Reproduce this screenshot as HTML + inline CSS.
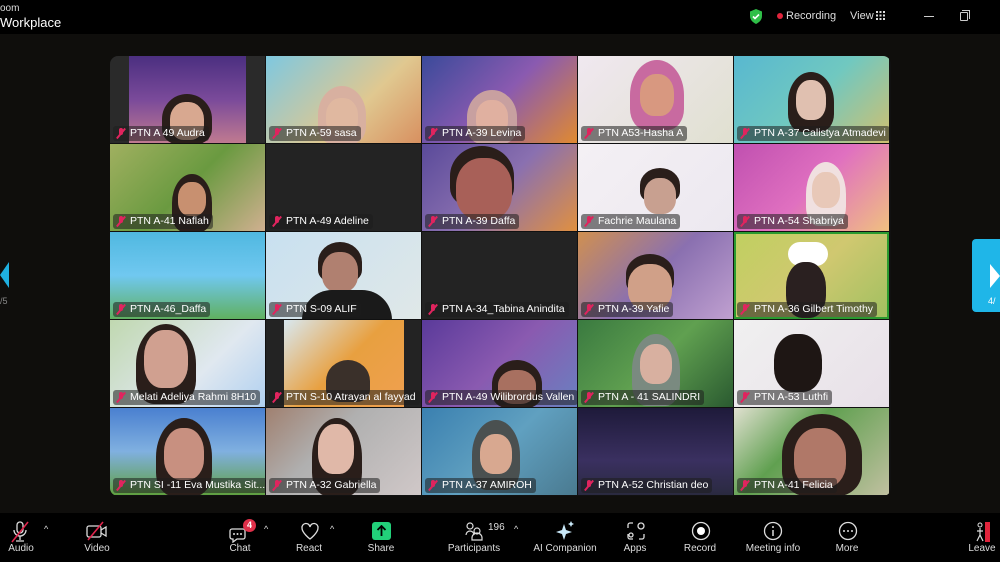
<!DOCTYPE html>
<html><head><meta charset="utf-8"><style>
*{margin:0;padding:0;box-sizing:border-box}
body{width:1000px;height:562px;background:#0f0e0c;font-family:"Liberation Sans",sans-serif;color:#fff;position:relative;overflow:hidden}
#top{position:absolute;left:0;top:0;width:1000px;height:34px;background:#000}
.grid{position:absolute;left:110px;top:56px;width:781px;height:440px;border-radius:8px;overflow:hidden;background:#111}
.t{position:absolute;width:155px;height:87px;overflow:hidden}
.lbl{position:absolute;left:3px;bottom:2px;height:15px;padding:0 4px 0 3px;background:rgba(30,30,30,.55);border-radius:3px;font-size:10.5px;line-height:15px;white-space:nowrap;display:flex;align-items:center;gap:4px}
.mic{width:10px;height:11px;position:relative}
.mic:before{content:"";position:absolute;left:3px;top:0;width:4px;height:7px;border-radius:2px;background:#e0245e}
.mic:after{content:"";position:absolute;left:4px;top:-1px;width:2px;height:13px;background:#e0245e;transform:rotate(40deg)}
.face{position:absolute;border-radius:45% 45% 40% 40%}
.hair{position:absolute;border-radius:50% 50% 30% 30%;background:#2a1e1a}
.tb{position:absolute;top:513px;left:0;width:1000px;height:49px;background:#000}
.it{position:absolute;top:543px;font-size:10px;color:#ddd;transform:translateX(-50%);white-space:nowrap}
.ic{position:absolute;top:521px;transform:translateX(-50%)}
.car{position:absolute;top:524px;font-size:9px;color:#ddd}
</style></head><body>
<div id="top">
<div style="position:absolute;left:0;top:3px;font-size:10px;color:#ddd">oom</div>
<div style="position:absolute;left:0;top:15px;font-size:13px;color:#fff">Workplace</div>
<svg style="position:absolute;left:749px;top:9px" width="14" height="15" viewBox="0 0 14 15"><path d="M7 0L13 2.5V7C13 11 10 13.5 7 15 4 13.5 1 11 1 7V2.5Z" fill="#2fbf48"/><path d="M4 7.5l2 2 4-4" stroke="#fff" stroke-width="1.6" fill="none"/></svg>
<div style="position:absolute;left:777px;top:13px;width:6px;height:6px;border-radius:3px;background:#e0243c"></div>
<div style="position:absolute;left:786px;top:10px;font-size:11px;color:#ddd">Recording</div>
<div style="position:absolute;left:850px;top:10px;font-size:11px;color:#ddd">View</div>
<svg style="position:absolute;left:876px;top:11px" width="9" height="9"><g fill="#ddd"><rect x="0" y="0" width="2" height="2"/><rect x="3.5" y="0" width="2" height="2"/><rect x="7" y="0" width="2" height="2"/><rect x="0" y="3.5" width="2" height="2"/><rect x="3.5" y="3.5" width="2" height="2"/><rect x="7" y="3.5" width="2" height="2"/><rect x="0" y="7" width="2" height="2"/><rect x="3.5" y="7" width="2" height="2"/><rect x="7" y="7" width="2" height="2"/></g></svg>
<div style="position:absolute;left:924px;top:16px;width:10px;height:1px;background:#ccc"></div>
<div style="position:absolute;left:960px;top:12px;width:8px;height:9px;border:1px solid #ccc;border-radius:1px"></div>
<div style="position:absolute;left:962px;top:10px;width:8px;height:9px;border-top:1px solid #ccc;border-right:1px solid #ccc"></div>
</div>

<div class="grid">
<!-- row1 -->
<div class="t" style="left:0;top:0;background:#2a2a2a"><div style="position:absolute;left:19px;top:0;width:117px;height:87px;background:linear-gradient(180deg,#4b2f80,#7a4a9a 50%,#c07a90)"></div><div class="hair" style="left:52px;top:38px;width:50px;height:50px"></div><div class="face" style="left:60px;top:46px;width:34px;height:38px;background:#d8a890"></div><div class="lbl"><span class="mic"></span>PTN A 49 Audra</div></div>
<div class="t" style="left:156px;top:0;background:linear-gradient(135deg,#7ec8e0,#e0c890 60%,#d89060)"><div class="hair" style="left:52px;top:30px;width:48px;height:58px;background:#d8b0a0"></div><div class="face" style="left:60px;top:42px;width:32px;height:38px;background:#e0b8a0"></div><div class="lbl"><span class="mic"></span>PTN A-59 sasa</div></div>
<div class="t" style="left:312px;top:0;background:linear-gradient(135deg,#3a4a9a,#8a5ab0 50%,#e08a30)"><div class="hair" style="left:45px;top:34px;width:50px;height:54px;background:#c8a0a0"></div><div class="face" style="left:54px;top:44px;width:32px;height:36px;background:#e0b0a0"></div><div class="lbl"><span class="mic"></span>PTN A-39 Levina</div></div>
<div class="t" style="left:468px;top:0;background:linear-gradient(135deg,#f0e8f0,#e0e0d0)"><div class="hair" style="left:52px;top:4px;width:54px;height:70px;background:#c86aa0"></div><div class="face" style="left:62px;top:18px;width:34px;height:42px;background:#d89880"></div><div class="lbl"><span class="mic"></span>PTN A53-Hasha A</div></div>
<div class="t" style="left:624px;top:0;background:linear-gradient(135deg,#58b8d0,#70c8c0 50%,#d0c070)"><div class="hair" style="left:54px;top:16px;width:46px;height:60px"></div><div class="face" style="left:62px;top:24px;width:30px;height:40px;background:#e0c0b0"></div><div class="lbl"><span class="mic"></span>PTN A-37 Calistya Atmadevi</div></div>
<!-- row2 -->
<div class="t" style="left:0;top:88px;background:linear-gradient(135deg,#a0b060,#6a9a40 50%,#d0b090)"><div class="hair" style="left:62px;top:30px;width:40px;height:58px"></div><div class="face" style="left:68px;top:38px;width:28px;height:34px;background:#c89070"></div><div class="lbl"><span class="mic"></span>PTN A-41 Naflah</div></div>
<div class="t" style="left:156px;top:88px;background:#232323"><div class="lbl"><span class="mic"></span>PTN A-49 Adeline</div></div>
<div class="t" style="left:312px;top:88px;background:linear-gradient(135deg,#5a4a9a,#8a70b0 50%,#e09040)"><div class="hair" style="left:28px;top:2px;width:64px;height:60px"></div><div class="face" style="left:34px;top:14px;width:56px;height:62px;background:#a86058"></div><div class="lbl"><span class="mic"></span>PTN A-39 Daffa</div></div>
<div class="t" style="left:468px;top:88px;background:linear-gradient(135deg,#f4f0f4,#ece8f0)"><div class="hair" style="left:62px;top:24px;width:40px;height:34px"></div><div class="face" style="left:66px;top:34px;width:32px;height:36px;background:#c8a090"></div><div class="lbl"><span class="mic"></span>Fachrie Maulana</div></div>
<div class="t" style="left:624px;top:88px;background:linear-gradient(135deg,#c050b0,#e070c0 50%,#f0c080)"><div class="hair" style="left:72px;top:18px;width:40px;height:64px;background:#f0e0e0"></div><div class="face" style="left:78px;top:28px;width:28px;height:36px;background:#e8c8b8"></div><div class="lbl"><span class="mic"></span>PTN A-54 Shabriya</div></div>
<!-- row3 -->
<div class="t" style="left:0;top:176px;background:linear-gradient(180deg,#50b8e0,#70c8f0 50%,#60b060)"><div class="lbl"><span class="mic"></span>PTN A-46_Daffa</div></div>
<div class="t" style="left:156px;top:176px;background:linear-gradient(135deg,#c8e0f0,#e0e8e8)"><div class="hair" style="left:52px;top:10px;width:44px;height:40px"></div><div class="face" style="left:56px;top:20px;width:36px;height:40px;background:#b08070"></div><div style="position:absolute;left:36px;top:58px;width:90px;height:30px;background:#1a1a1a;border-radius:30px 30px 0 0"></div><div class="lbl"><span class="mic"></span>PTN S-09 ALIF</div></div>
<div class="t" style="left:312px;top:176px;background:#232323"><div class="lbl"><span class="mic"></span>PTN A-34_Tabina Anindita</div></div>
<div class="t" style="left:468px;top:176px;background:linear-gradient(135deg,#d09050,#8a70b0 50%,#c0a0d0)"><div class="hair" style="left:48px;top:22px;width:48px;height:40px"></div><div class="face" style="left:50px;top:32px;width:44px;height:46px;background:#d0a088"></div><div class="lbl"><span class="mic"></span>PTN A-39 Yafie</div></div>
<div class="t" style="left:624px;top:176px;background:linear-gradient(135deg,#c0d060,#d0c870 50%,#a0c060);outline:2px solid #2a9a30;outline-offset:-2px"><div style="position:absolute;left:54px;top:10px;width:40px;height:24px;background:#fff;border-radius:12px"></div><div class="face" style="left:52px;top:30px;width:40px;height:56px;background:#2a2020"></div><div class="lbl"><span class="mic"></span>PTN A-36 Gilbert Timothy</div></div>
<!-- row4 -->
<div class="t" style="left:0;top:264px;background:linear-gradient(135deg,#c0d8b0,#e0e8f0 60%,#b0d0f0)"><div class="hair" style="left:26px;top:4px;width:60px;height:80px"></div><div class="face" style="left:34px;top:10px;width:44px;height:58px;background:#d0a090"></div><div class="lbl"><span class="mic"></span>Melati Adeliya Rahmi 8H10</div></div>
<div class="t" style="left:156px;top:264px;background:#232323"><div style="position:absolute;left:18px;top:0;width:120px;height:87px;background:linear-gradient(135deg,#d8e8f0,#e8a040 50%,#f0a050)"></div><div class="hair" style="left:60px;top:40px;width:44px;height:42px;background:#3a302a"></div><div class="lbl"><span class="mic"></span>PTN S-10 Atrayan al fayyad</div></div>
<div class="t" style="left:312px;top:264px;background:linear-gradient(135deg,#5a3a9a,#8a5ab0 50%,#6a80c0)"><div class="hair" style="left:70px;top:40px;width:50px;height:48px"></div><div class="face" style="left:76px;top:50px;width:38px;height:34px;background:#a87060"></div><div class="lbl"><span class="mic"></span>PTN A-49 Wilibrordus Vallen</div></div>
<div class="t" style="left:468px;top:264px;background:linear-gradient(135deg,#3a7a40,#60a050 50%,#2a5a30)"><div class="hair" style="left:54px;top:14px;width:48px;height:72px;background:#7a8a80"></div><div class="face" style="left:62px;top:24px;width:32px;height:40px;background:#d8b0a0"></div><div class="lbl"><span class="mic"></span>PTN A - 41 SALINDRI</div></div>
<div class="t" style="left:624px;top:264px;background:linear-gradient(135deg,#f0f0f0,#e8e0e8)"><div class="face" style="left:40px;top:14px;width:48px;height:58px;background:#1e1614"></div><div class="lbl"><span class="mic"></span>PTN A-53 Luthfi</div></div>
<!-- row5 -->
<div class="t" style="left:0;top:352px;background:linear-gradient(180deg,#4a80d0,#80b0e0 50%,#60a040)"><div class="hair" style="left:46px;top:10px;width:56px;height:78px"></div><div class="face" style="left:54px;top:20px;width:40px;height:52px;background:#c89080"></div><div class="lbl"><span class="mic"></span>PTN SI -11 Eva Mustika Sit...</div></div>
<div class="t" style="left:156px;top:352px;background:linear-gradient(135deg,#a08070,#b0b0b0 40%,#d0c8c8)"><div class="hair" style="left:46px;top:10px;width:50px;height:78px"></div><div class="face" style="left:52px;top:16px;width:36px;height:50px;background:#e0b8a8"></div><div class="lbl"><span class="mic"></span>PTN A-32 Gabriella</div></div>
<div class="t" style="left:312px;top:352px;background:linear-gradient(135deg,#3a80b0,#60a0c0 50%,#4a7a90)"><div class="hair" style="left:50px;top:12px;width:48px;height:70px;background:#4a5050"></div><div class="face" style="left:58px;top:26px;width:32px;height:40px;background:#d8a890"></div><div class="lbl"><span class="mic"></span>PTN A-37 AMIROH</div></div>
<div class="t" style="left:468px;top:352px;background:linear-gradient(180deg,#1e1a3a,#3a3060 60%,#2a2a40)"><div class="lbl"><span class="mic"></span>PTN A-52 Christian deo</div></div>
<div class="t" style="left:624px;top:352px;background:linear-gradient(135deg,#e0e0d0,#60a050 40%,#c0c0a0)"><div class="hair" style="left:48px;top:6px;width:80px;height:82px"></div><div class="face" style="left:60px;top:20px;width:52px;height:60px;background:#b07868"></div><div class="lbl"><span class="mic"></span>PTN A-41 Felicia</div></div>
</div>

<div style="position:absolute;left:0;top:262px;width:0;height:0;border-top:13px solid transparent;border-bottom:13px solid transparent;border-right:9px solid #1fb0e0"></div>
<div style="position:absolute;left:0;top:296px;font-size:9px;color:#888">/5</div>
<div style="position:absolute;left:972px;top:239px;width:28px;height:73px;background:#1fb6e8;border-radius:4px 0 0 4px"></div>
<div style="position:absolute;left:990px;top:264px;width:0;height:0;border-top:12px solid transparent;border-bottom:12px solid transparent;border-left:10px solid #fff"></div>
<div style="position:absolute;left:988px;top:296px;font-size:9px;color:#fff">4/</div>

<div class="tb"></div>
<svg class="ic" style="left:20px" width="20" height="22" viewBox="0 0 20 22"><rect x="7" y="1" width="6" height="11" rx="3" stroke="#ddd" fill="none" stroke-width="1.3"/><path d="M4 9a6 6 0 0012 0M10 15v4M6 20h8" stroke="#ddd" fill="none" stroke-width="1.3"/><path d="M2 21L18 1" stroke="#e0244c" stroke-width="1.6"/></svg>
<div class="car" style="left:44px">^</div><div class="it" style="left:21px">Audio</div>
<svg class="ic" style="left:97px" width="22" height="20" viewBox="0 0 22 20"><rect x="1" y="5" width="14" height="11" rx="2" stroke="#ddd" fill="none" stroke-width="1.3"/><path d="M15 9l5-3v9l-5-3" stroke="#ddd" fill="none" stroke-width="1.3"/><path d="M2 19L17 1" stroke="#e0244c" stroke-width="1.6"/></svg>
<div class="it" style="left:97px">Video</div>
<svg class="ic" style="left:239px" width="20" height="22" viewBox="0 0 20 22"><path d="M3 8h11a2 2 0 012 2v6a2 2 0 01-2 2H8l-4 3v-3H3a2 2 0 01-2-2v-6a2 2 0 012-2z" stroke="#ddd" fill="none" stroke-width="1.3"/><circle cx="5" cy="13" r="1" fill="#ddd"/><circle cx="8.5" cy="13" r="1" fill="#ddd"/><circle cx="12" cy="13" r="1" fill="#ddd"/></svg>
<div style="position:absolute;left:243px;top:519px;width:13px;height:13px;border-radius:7px;background:#e0304a;font-size:9px;text-align:center;line-height:13px;font-weight:bold">4</div>
<div class="car" style="left:264px">^</div><div class="it" style="left:240px">Chat</div>
<svg class="ic" style="left:310px" width="20" height="20" viewBox="0 0 20 20"><path d="M10 18S2 12 2 7a4 4 0 018-1 4 4 0 018 1c0 5-8 11-8 11z" stroke="#ddd" fill="none" stroke-width="1.3"/></svg>
<div class="car" style="left:330px">^</div><div class="it" style="left:309px">React</div>
<div style="position:absolute;left:372px;top:522px;width:19px;height:18px;background:#22d17a;border-radius:3px"></div>
<svg style="position:absolute;left:376px;top:525px" width="11" height="12"><path d="M5.5 1v10M1.5 5l4-4 4 4" stroke="#000" stroke-width="1.8" fill="none"/></svg>
<div class="it" style="left:381px">Share</div>
<svg class="ic" style="left:474px" width="18" height="20" viewBox="0 0 18 20"><circle cx="5" cy="5" r="3" stroke="#ddd" fill="none" stroke-width="1.2"/><circle cx="12" cy="10" r="3" stroke="#ddd" fill="none" stroke-width="1.2"/><path d="M1 14a4 4 0 018 0M7 19v-2a5 5 0 0110 0v2z" stroke="#ddd" fill="none" stroke-width="1.2"/></svg>
<div style="position:absolute;left:488px;top:522px;font-size:10px;color:#ddd">196</div>
<div class="car" style="left:514px">^</div><div class="it" style="left:474px">Participants</div>
<svg class="ic" style="left:565px" width="20" height="20" viewBox="0 0 20 20"><path d="M9 3l2 6 6 2-6 2-2 6-2-6-6-2 6-2z" fill="#c8e8f8"/><path d="M16 0l1 2 2 1-2 1-1 2-1-2-2-1 2-1z" fill="#c8e8f8"/></svg>
<div class="it" style="left:565px">AI Companion</div>
<svg class="ic" style="left:636px" width="20" height="20" viewBox="0 0 20 20"><path d="M7 2H4a2 2 0 00-2 2v3M2 13v3a2 2 0 002 2h3M18 13v3a2 2 0 01-2 2h-3" stroke="#ddd" fill="none" stroke-width="1.3"/><circle cx="15" cy="5" r="3" stroke="#ddd" fill="none" stroke-width="1.3"/><circle cx="5" cy="14" r="2" stroke="#ddd" fill="none" stroke-width="1.3"/></svg>
<div class="it" style="left:635px">Apps</div>
<svg class="ic" style="left:701px" width="20" height="20"><circle cx="10" cy="10" r="8.5" stroke="#ddd" fill="none" stroke-width="1.3"/><circle cx="10" cy="10" r="4" fill="#fff"/></svg>
<div class="it" style="left:700px">Record</div>
<svg class="ic" style="left:773px" width="20" height="20"><circle cx="10" cy="10" r="8.5" stroke="#ddd" fill="none" stroke-width="1.3"/><circle cx="10" cy="6" r="1" fill="#ddd"/><path d="M10 9v6" stroke="#ddd" stroke-width="1.5"/></svg>
<div class="it" style="left:773px">Meeting info</div>
<svg class="ic" style="left:848px" width="20" height="20"><circle cx="10" cy="10" r="8.5" stroke="#ddd" fill="none" stroke-width="1.3"/><circle cx="6" cy="10" r="1" fill="#ddd"/><circle cx="10" cy="10" r="1" fill="#ddd"/><circle cx="14" cy="10" r="1" fill="#ddd"/></svg>
<div class="it" style="left:847px">More</div>
<svg class="ic" style="left:982px" width="20" height="22" viewBox="0 0 20 22"><rect x="13" y="1" width="5" height="20" fill="#e0243c"/><circle cx="8" cy="4" r="2" stroke="#ddd" fill="none"/><path d="M8 7v7l-3 6M8 14l3 6M5 10h6" stroke="#ddd" fill="none" stroke-width="1.2"/></svg>
<div class="it" style="left:982px">Leave</div>
</body></html>
